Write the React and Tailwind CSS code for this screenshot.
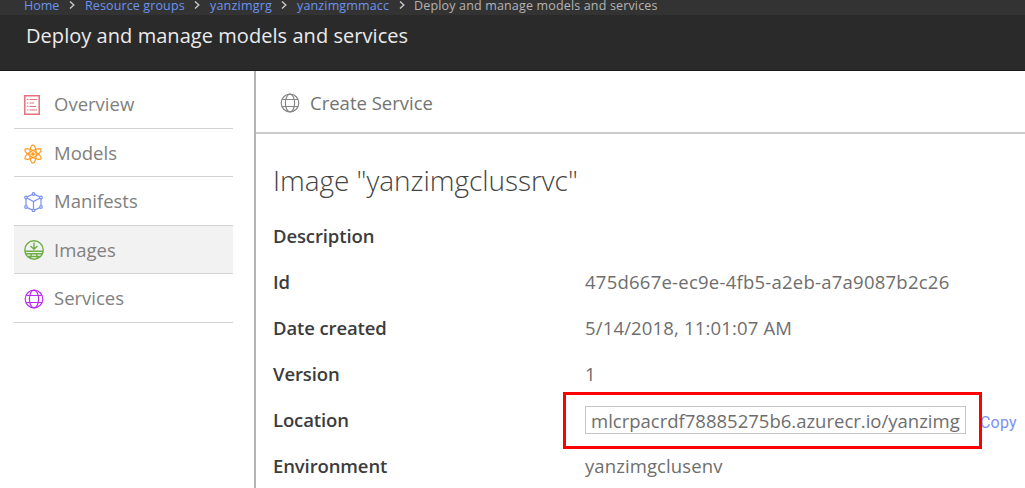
const globe = (
  <>
    <circle cx="10" cy="10" r="8.8" />
    <ellipse cx="10" cy="10" rx="4.6" ry="8.8" />
    <path d="M2.2 6.5h15.6M2.2 13.5h15.6" />
  </>
);

function Icon({ className, children }) {
  return (
    <svg viewBox="0 0 20 20" fill="none" stroke="currentColor" strokeWidth="1.2" className={className}>
      {children}
    </svg>
  );
}

const crumbs = [
  ["Home", "w-[36px]"],
  ["Resource groups", "w-[100px] tracking-[0.12px]"],
  ["yanzimgrg", "w-[62px] tracking-[0.2px]"],
  ["yanzimgmmacc", "w-[93px] tracking-[0.15px]"],
];

const nav = [
  {
    label: "Overview",
    color: "text-[#e8707a]",
    icon: (
      <>
        <path d="M.8 .8h14.4v18.4H.8z" strokeWidth="1.5" />
        <path d="M3 4.5h1.4M5.6 4.5H13M3 8h1.4M5.6 8H10M3 11.5h1.4M5.6 11.5H12M3 15h1.4M5.6 15H13" />
      </>
    ),
  },
  {
    label: "Models",
    color: "text-[#ff9c20]",
    icon: (
      <>
        <ellipse cx="9" cy="10" rx="3.2" ry="9.2" />
        <ellipse cx="9" cy="10" rx="3.2" ry="9.2" transform="rotate(60 9 10)" />
        <ellipse cx="9" cy="10" rx="3.2" ry="9.2" transform="rotate(120 9 10)" />
        <circle cx="9" cy="10" r="1.2" fill="currentColor" />
      </>
    ),
  },
  {
    label: "Manifests",
    color: "text-[#7b92f0]",
    icon: (
      <>
        <path d="M9.5 2 2 5.5v9.5l7.5 3.5L17 15V5.5zM2 5.5l7.5 4L17 5.5M9.5 9.5v9" />
        <g fill="#fff">
          <circle cx="9.5" cy="2" r="1.3" />
          <circle cx="2" cy="5.5" r="1.3" />
          <circle cx="17" cy="5.5" r="1.3" />
          <circle cx="2" cy="15" r="1.3" />
          <circle cx="17" cy="15" r="1.3" />
          <circle cx="9.5" cy="18.3" r="1.3" />
        </g>
      </>
    ),
  },
  {
    label: "Images",
    color: "text-[#6fae45]",
    active: true,
    icon: (
      <>
        <circle cx="10" cy="10" r="9.2" strokeWidth="1.4" />
        <path d="M10 2.5v6.5M6.5 6 10 9.3 13.5 6M1 11.3h18M1.5 13.8h17M3.5 16.5h13M7.5 13.8 6.5 18.2M12.5 13.8l1 4.4" strokeWidth="1.4" />
      </>
    ),
  },
  { label: "Services", color: "text-[#bd2df0]", icon: globe },
];

const rows = [
  ["Description", ""],
  ["Id", "475d667e-ec9e-4fb5-a2eb-a7a9087b2c26", "tracking-[0.24px]"],
  ["Date created", "5/14/2018, 11:01:07 AM", "tracking-[0.16px]"],
  ["Version", "1", ""],
  ["Location", null],
  ["Environment", "yanzimgclusenv", "tracking-[0.1px]"],
];

export default function App() {
  return (
    <div className="flex h-[488px] w-full flex-col overflow-hidden bg-white font-['Open_Sans','Noto_Sans',sans-serif] whitespace-nowrap">
      <div className="flex h-[15px] shrink-0 items-start bg-[#333333] pl-6 text-[12.5px] leading-[11px] text-[#6b93ee]">
        {crumbs.map(([text, width]) => (
          <div key={text} className="flex items-start">
            <span className={width}>{text}</span>
            <svg viewBox="0 0 6 8" className="mt-[1px] mr-[10px] ml-[9px] h-2 w-[6px]" fill="none" stroke="#c8c8c8" strokeWidth="1.4">
              <path d="M1 .5 4.8 4 1 7.5" />
            </svg>
          </div>
        ))}
        <span className="-ml-px tracking-[0.16px] text-[#b4b4b4]">Deploy and manage models and services</span>
      </div>
      <header className="h-14 shrink-0 border-b border-[#1e1a1c] bg-[#2a2a2a] pt-[7px] pl-[26px] text-xl leading-7 tracking-[0.05px] text-[#ebebeb]">
        Deploy and manage models and services
      </header>
      <div className="flex min-h-0 flex-1">
        <nav className="w-[256px] shrink-0 border-r-2 border-[#b3b3b3] pt-[9.6px] pl-[14px]">
          {nav.map((item) => (
            <div
              key={item.label}
              className={`flex h-[48.4px] w-[219px] items-center border-b border-[#d2d2d2] pl-[10px] text-[18.5px] text-[#808080] ${item.active ? "bg-[#f2f2f2]" : ""}`}
            >
              <Icon className={`mt-[2px] h-5 w-5 ${item.color}`}>{item.icon}</Icon>
              <span className="ml-[10px]">{item.label}</span>
            </div>
          ))}
        </nav>
        <main className="min-w-0 flex-1">
          <div className="flex h-[63px] items-center border-b-2 border-[#cbcbcb] pt-[2px] pl-6 text-[18.5px] text-[#737373]">
            <Icon className="h-5 w-5 text-[#858585]">{globe}</Icon>
            <span className="ml-[10px]">Create Service</span>
          </div>
          <h1 className="mt-[26px] ml-[17px] text-[28px] leading-10 font-light tracking-[-0.04px] text-[#444]">Image "yanzimgclussrvc"</h1>
          <dl className="mt-[13px] ml-[17px]">
            {rows.map(([name, value, track]) => (
              <div key={name} className="flex h-[46px] items-center">
                <dt className="w-[312px] shrink-0 text-[18.5px] font-semibold tracking-[-0.12px] text-[#3c3c3c]">{name}</dt>
                {value === null ? (
                  <dd className="relative flex items-center">
                    <div className="h-7 w-[381px] border border-[#c6c6c6] pl-[5px] text-[18.5px] leading-[28px] text-[#6e6e6e]">
                      mlcrpacrdf78885275b6.azurecr.io/yanzimg
                    </div>
                    <span className="mt-[5px] ml-[14px] font-['Roboto',sans-serif] text-base tracking-[0.2px] text-[#7b92f0]">Copy</span>
                    <div className="absolute top-[-14px] left-[-22px] h-[57px] w-[419px] border-3 border-[#ff0000]" />
                  </dd>
                ) : (
                  <dd className={`text-[18.5px] text-[#6e6e6e] ${track}`}>{value}</dd>
                )}
              </div>
            ))}
          </dl>
        </main>
      </div>
    </div>
  );
}
